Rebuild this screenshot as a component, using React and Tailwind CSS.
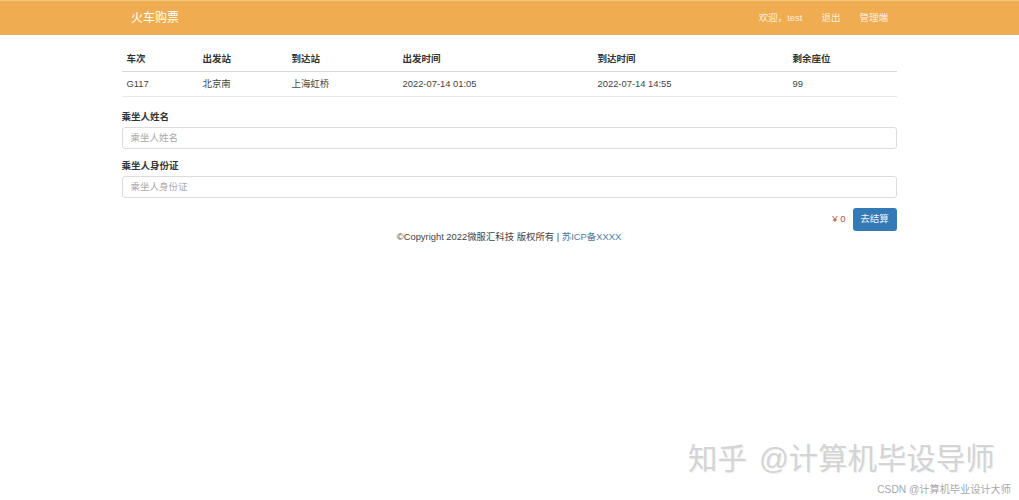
export default function App() {
  const font = { fontFamily: '"Liberation Sans","Noto Sans CJK SC",sans-serif' };
  const th = "h-[25px] px-[5px] pt-[1px] text-left font-bold align-middle";
  const td = "h-[25px] px-[5px] pt-[1px] text-left text-[9.4px] font-normal align-middle text-[#444]";
  const input = "block h-[22px] w-full rounded-[3px] border border-[#dcdcdc] px-[8px] text-[9.5px] placeholder:text-[#aaa]";
  return (
    <div style={font} className="relative h-[500px] w-[1019px] overflow-hidden bg-white text-[9.5px] text-[#333]">
      <header className="flex h-[35px] items-center border-t border-[#f3c583] bg-[#efac50] px-[131px] text-white">
        <span className="text-[12px]">火车购票</span>
        <nav className="ml-auto flex gap-[19px] text-[9.5px] text-[#fbeeda]">
          <span>欢迎，test</span>
          <span>退出</span>
          <span>管理端</span>
        </nav>
      </header>
      <main className="ml-[121.5px] mt-[11px] w-[775px]">
        <table className="w-full table-fixed border-collapse">
          <colgroup>
            <col className="w-[76px]" />
            <col className="w-[89px]" />
            <col className="w-[111px]" />
            <col className="w-[195px]" />
            <col className="w-[195px]" />
            <col />
          </colgroup>
          <thead>
            <tr className="border-b border-[#d8d8d8]">
              <th className={th}>车次</th>
              <th className={th}>出发站</th>
              <th className={th}>到达站</th>
              <th className={th}>出发时间</th>
              <th className={th}>到达时间</th>
              <th className={th}>剩余座位</th>
            </tr>
          </thead>
          <tbody>
            <tr className="border-b border-[#e8e8e8]">
              <td className={td}>G117</td>
              <td className={td}>北京南</td>
              <td className={td}>上海虹桥</td>
              <td className={td}>2022-07-14 01:05</td>
              <td className={td}>2022-07-14 14:55</td>
              <td className={td}>99</td>
            </tr>
          </tbody>
        </table>
        <form className="mt-[13px]">
          <label className="block h-[17px] font-bold leading-[13px]">乘坐人姓名</label>
          <input style={font} placeholder="乘坐人姓名" className={input} />
          <label className="mt-[10px] block h-[17px] font-bold leading-[13px]">乘坐人身份证</label>
          <input style={font} placeholder="乘坐人身份证" className={input} />
          <div className="mt-[10px] flex items-center justify-end gap-[7px]">
            <span className="text-[#a9554f]">¥ 0</span>
            <button
              type="button"
              className="h-[23px] w-[44px] rounded-[3px] bg-[#337ab7] text-center text-[9.5px] text-[#eef4f9]"
            >
              去结算
            </button>
          </div>
        </form>
        <footer className="h-[12px] text-center text-[9.4px] leading-[12px] text-[#444]">
          ©Copyright 2022微服汇科技 版权所有 | <a className="text-[#4f7d9f]">苏ICP备XXXX</a>
        </footer>
      </main>
      <div className="absolute left-[688px] top-[441px] whitespace-nowrap text-[29.4px] leading-[36px] text-[#d4d4d4] [word-spacing:4px] [text-shadow:1px_1px_0_#f1f1f1]">
        知乎 @计算机毕设导师
      </div>
      <div className="absolute right-[8px] top-[483px] whitespace-nowrap text-[10.2px] leading-[14px] text-[#a8a8a8]">
        CSDN @计算机毕业设计大师
      </div>
    </div>
  );
}
